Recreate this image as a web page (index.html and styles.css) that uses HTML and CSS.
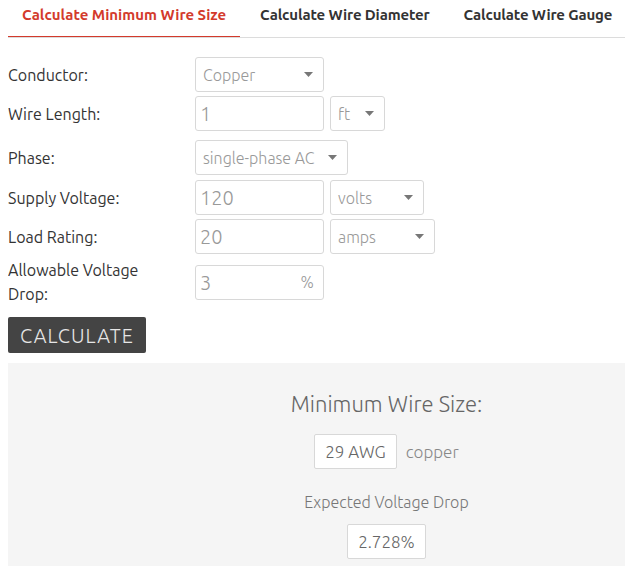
FILE: index.html
```html
<!DOCTYPE html>
<html>
<head>
<meta charset="utf-8">
<link rel="stylesheet" href="styles.css">
</head>
<body>
<div class="page">
  <nav class="tabs">
    <div class="tab active">Calculate Minimum Wire Size</div>
    <div class="tab">Calculate Wire Diameter</div>
    <div class="tab">Calculate Wire Gauge</div>
  </nav>

  <form class="form">
    <div class="row">
      <label class="label">Conductor:</label>
      <div class="controls">
        <div class="select w-conductor"><span>Copper</span><svg class="caret" width="9" height="5" viewBox="0 0 9 5"><path d="M0 0h9L4.5 5z" fill="#777"/></svg></div>
      </div>
    </div>
    <div class="row row-gap-lg">
      <label class="label">Wire Length:</label>
      <div class="controls">
        <div class="input">1</div>
        <div class="select w-ft"><span>ft</span><svg class="caret" width="9" height="5" viewBox="0 0 9 5"><path d="M0 0h9L4.5 5z" fill="#777"/></svg></div>
      </div>
    </div>
    <div class="row row-gap-sm">
      <label class="label">Phase:</label>
      <div class="controls">
        <div class="select w-phase"><span>single-phase AC</span><svg class="caret" width="9" height="5" viewBox="0 0 9 5"><path d="M0 0h9L4.5 5z" fill="#777"/></svg></div>
      </div>
    </div>
    <div class="row">
      <label class="label">Supply Voltage:</label>
      <div class="controls">
        <div class="input">120</div>
        <div class="select w-volts"><span>volts</span><svg class="caret" width="9" height="5" viewBox="0 0 9 5"><path d="M0 0h9L4.5 5z" fill="#777"/></svg></div>
      </div>
    </div>
    <div class="row">
      <label class="label">Load Rating:</label>
      <div class="controls">
        <div class="input">20</div>
        <div class="select w-amps"><span>amps</span><svg class="caret" width="9" height="5" viewBox="0 0 9 5"><path d="M0 0h9L4.5 5z" fill="#777"/></svg></div>
      </div>
    </div>
    <div class="row">
      <label class="label">Allowable Voltage<br>Drop:</label>
      <div class="controls">
        <div class="input input-suffix"><span>3</span><span class="suffix">%</span></div>
      </div>
    </div>
    <div class="actions">
      <button type="button" class="btn">CALCULATE</button>
    </div>
  </form>

  <section class="result">
    <h2 class="result-title">Minimum Wire Size:</h2>
    <div class="result-line">
      <span class="value-box">29 AWG</span>
      <span class="result-note">copper</span>
    </div>
    <div class="result-sub">Expected Voltage Drop</div>
    <div class="result-line">
      <span class="value-box">2.728%</span>
    </div>
  </section>
</div>
</body>
</html>
```

FILE: styles.css
```css
body {
  margin: 0 0 0 8px;
  background: #fff;
  font-family: "Ubuntu", "Lato", "Open Sans", sans-serif;
  color: #333;
}

/* Tabs */
.tabs {
  display: flex;
  height: 37px;
  border-bottom: 1px solid #dcdcdc;
  overflow: hidden;
}
.tab {
  height: 32px;
  padding: 6px 14px 0;
  margin-right: 6px;
  font-size: 15px;
  line-height: 18px;
  font-weight: 700;
  color: #333;
  letter-spacing: -0.15px;
  white-space: nowrap;
}
.tab.active {
  color: #d33a2c;
  letter-spacing: 0;
  border-bottom: 3px solid #d33a2c;
  margin-bottom: -1px;
  height: 30px;
}

/* Form */
.form {
  margin: 19px 0 0;
  display: flex;
  flex-direction: column;
  gap: 4px;
}
.row {
  display: flex;
  align-items: center;
}
.row-gap-lg {
  margin-bottom: 5px;
}
.row-gap-sm {
  margin-bottom: 1px;
}
.label {
  width: 187px;
  font-size: 16px;
  line-height: 24px;
  color: #333;
}
.controls {
  display: flex;
  gap: 6px;
}
.input, .select {
  box-sizing: border-box;
  height: 35px;
  border: 1px solid #d8d8d8;
  border-radius: 3px;
  background: #fff;
  color: #999;
  font-weight: 300;
}
.input {
  width: 129px;
  padding: 0 4px;
  font-size: 20px;
  line-height: 33px;
}
.input-suffix {
  display: flex;
  justify-content: space-between;
  padding-right: 9px;
}
.suffix {
  font-size: 16px;
}
.select {
  display: flex;
  align-items: center;
  justify-content: space-between;
  padding: 0 10px 0 7px;
  font-size: 16px;
}
.caret {
  display: block;
  flex: none;
}
.w-conductor { width: 129px; }
.w-ft { width: 55px; }
.w-phase { width: 153px; }
.w-volts { width: 94px; }
.w-amps { width: 105px; }

.actions {
  margin-top: 7px;
}
.btn {
  display: block;
  height: 36px;
  width: 138px;
  padding: 0;
  border: none;
  border-radius: 2px;
  background: #444;
  color: #e6e6e6;
  font-family: inherit;
  font-size: 20px;
  font-weight: 300;
  letter-spacing: 1px;
}

/* Result */
.result {
  margin-top: 10px;
  background: #f5f5f5;
  padding: 26px 0 20px 140px;
  text-align: center;
  color: #666;
}
.result-title {
  margin: 0;
  font-size: 22px;
  line-height: 30px;
  font-weight: 300;
  color: #666;
}
.result-line {
  display: flex;
  justify-content: center;
  align-items: center;
  gap: 9px;
  margin-top: 15px;
}
.value-box {
  box-sizing: border-box;
  height: 35px;
  padding: 0 10px;
  border: 1px solid #d8d8d8;
  border-radius: 2px;
  background: #fff;
  font-size: 17px;
  line-height: 33px;
  font-weight: 300;
  color: #666;
}
.result-note {
  font-size: 17px;
  font-weight: 300;
  color: #888;
}
.result-sub {
  margin-top: 21px;
  font-size: 16px;
  line-height: 24px;
  font-weight: 300;
  color: #777;
}
.result-sub + .result-line {
  margin-top: 10px;
}
```
